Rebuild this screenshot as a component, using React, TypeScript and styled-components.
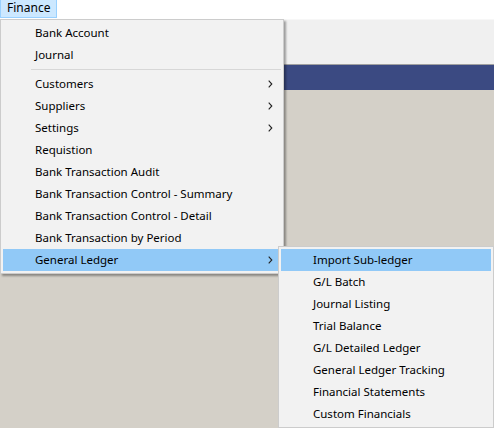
import React from 'react';
import styled, { createGlobalStyle } from 'styled-components';

const GlobalStyle = createGlobalStyle`
  html, body {
    margin: 0;
    padding: 0;
    height: 100%;
    overflow: hidden;
  }
  body {
    font-family: "Noto Sans", "Open Sans", sans-serif;
    font-size: 11.5px;
    color: #000;
    background: #d4d0c8;
  }
  #root {
    height: 100%;
  }
`;

const Window = styled.div`
  position: relative;
  height: 100%;
  display: flex;
  flex-direction: column;
`;

const MenuBar = styled.div`
  height: 19px;
  background: #ffffff;
  border-bottom: 1px solid #f7f7f7;
  display: flex;
  align-items: stretch;
`;

const MenuBarItem = styled.div<{ $open?: boolean }>`
  display: flex;
  align-items: center;
  padding: 0 6px 1px;
  height: 18px;
  box-sizing: border-box;
  font-size: 12px;
  background: ${({ $open }) => ($open ? '#cce8ff' : 'transparent')};
  border: 1px solid ${({ $open }) => ($open ? '#99d1ff' : 'transparent')};
  border-top: none;
  line-height: 1;
`;

const ToolbarArea = styled.div`
  height: 44px;
  background: #f0f0f0;
  border-bottom: 1px solid #a0a0a0;
`;

const TitleBand = styled.div`
  height: 25px;
  background: #3b4a82;
`;

const Workspace = styled.div`
  flex: 1;
  background: #d4d0c8;
`;

const Popup = styled.div<{ $left: number; $top: number; $width: number }>`
  position: absolute;
  left: ${({ $left }) => $left}px;
  top: ${({ $top }) => $top}px;
  width: ${({ $width }) => $width}px;
  box-sizing: border-box;
  background: #f2f2f2;
  border: 1px solid #cccccc;
  padding: 2px;
  box-shadow: 2px 2px 2px rgba(0, 0, 0, 0.35);
  display: flex;
  flex-direction: column;
`;

const Item = styled.div<{ $active?: boolean }>`
  height: 22px;
  box-sizing: border-box;
  display: flex;
  align-items: center;
  padding: 0 8px 1px 32px;
  background: ${({ $active }) => ($active ? '#91c9f7' : 'transparent')};
  white-space: nowrap;
`;

const Label = styled.span`
  flex: 1;
  color: #000;
`;

const Separator = styled.div`
  height: 7px;
  display: flex;
  align-items: center;
  padding-left: 28px;
  &::after {
    content: '';
    flex: 1;
    height: 1px;
    background: #d7d7d7;
  }
`;

const Chevron = () => (
  <svg width="5" height="8" viewBox="0 0 5 8">
    <path d="M0.7 0.7 L3.8 4 L0.7 7.3" fill="none" stroke="#222" strokeWidth="1.1" />
  </svg>
);

type Entry = { label?: string; sub?: boolean; active?: boolean; sep?: boolean };

const financeItems: Entry[] = [
  { label: 'Bank Account' },
  { label: 'Journal' },
  { sep: true },
  { label: 'Customers', sub: true },
  { label: 'Suppliers', sub: true },
  { label: 'Settings', sub: true },
  { label: 'Requistion' },
  { label: 'Bank Transaction Audit' },
  { label: 'Bank Transaction Control - Summary' },
  { label: 'Bank Transaction Control - Detail' },
  { label: 'Bank Transaction by Period' },
  { label: 'General Ledger', sub: true, active: true },
];

const ledgerItems: Entry[] = [
  { label: 'Import Sub-ledger', active: true },
  { label: 'G/L Batch' },
  { label: 'Journal Listing' },
  { label: 'Trial Balance' },
  { label: 'G/L Detailed Ledger' },
  { label: 'General Ledger Tracking' },
  { label: 'Financial Statements' },
  { label: 'Custom Financials' },
];

const MenuList: React.FC<{ items: Entry[] }> = ({ items }) => (
  <>
    {items.map((it, i) =>
      it.sep ? (
        <Separator key={i} />
      ) : (
        <Item key={i} $active={it.active}>
          <Label>{it.label}</Label>
          {it.sub && <Chevron />}
        </Item>
      )
    )}
  </>
);

export default function App() {
  return (
    <>
      <GlobalStyle />
      <Window>
        <MenuBar>
          <MenuBarItem $open>Finance</MenuBarItem>
        </MenuBar>
        <ToolbarArea />
        <TitleBand />
        <Workspace />

        <Popup $left={0} $top={19} $width={284}>
          <MenuList items={financeItems} />
        </Popup>

        <Popup $left={278} $top={246} $width={216}>
          <MenuList items={ledgerItems} />
        </Popup>
      </Window>
    </>
  );
}
